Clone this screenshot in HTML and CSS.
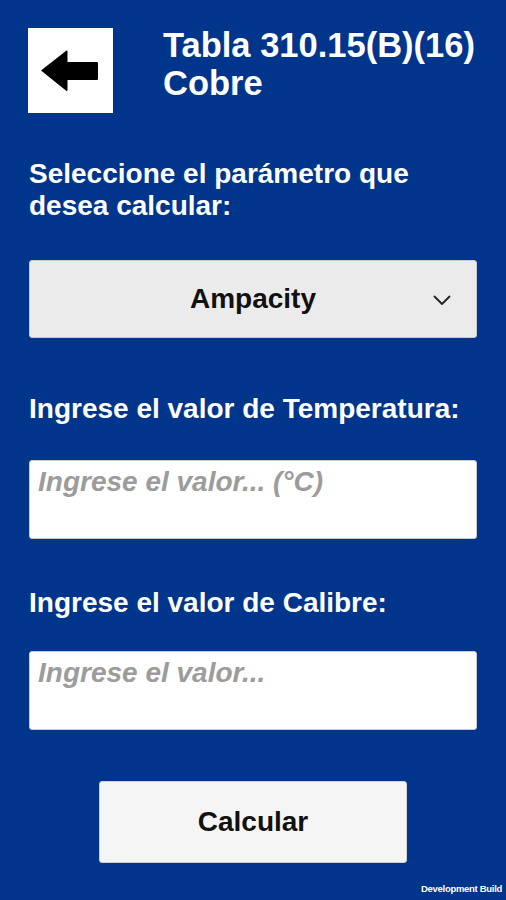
FILE: index.html
```html
<!DOCTYPE html>
<html lang="es">
<head>
<meta charset="utf-8">
<title>Tabla 310.15(B)(16) Cobre</title>
<link rel="stylesheet" href="styles.css">
</head>
<body>
<main class="screen">
  <header class="header">
    <button class="back" type="button" aria-label="Atrás">
      <svg width="85" height="85" viewBox="0 0 85 85">
        <path d="M13 42.5 L38.5 22.5 Q39.5 22 39.5 23.5 L39.5 34 L69 34 Q70 34 70 35 L70 51 Q70 52 69 52 L39.5 52 L39.5 62 Q39.5 63.5 38.5 63 Z" fill="#000"/>
      </svg>
    </button>
    <h1 class="title">Tabla 310.15(B)(16)<br>Cobre</h1>
  </header>

  <p class="label label-first">Seleccione el parámetro que desea calcular:</p>
  <div class="select">
    <span class="select-text">Ampacity</span>
    <svg class="chevron" width="18" height="11" viewBox="0 0 18 11">
      <path d="M1.5 1.5 L9 9 L16.5 1.5" fill="none" stroke="#222" stroke-width="1.8" stroke-linecap="round" stroke-linejoin="round"/>
    </svg>
  </div>

  <p class="label label-temp">Ingrese el valor de Temperatura:</p>
  <div class="input"><span class="placeholder">Ingrese el valor... (°C)</span></div>

  <p class="label label-cal">Ingrese el valor de Calibre:</p>
  <div class="input"><span class="placeholder">Ingrese el valor...</span></div>

  <div class="actions">
    <button class="calc" type="button">Calcular</button>
  </div>
  <div class="devbuild">Development Build</div>
</main>
</body>
</html>
```

FILE: styles.css
```css
html, body {
  margin: 0;
  padding: 0;
  background: #00358c;
}
body {
  font-family: "Liberation Sans", Arial, sans-serif;
  color: #fff;
}
.screen {
  width: 506px;
  height: 900px;
  box-sizing: border-box;
  padding: 28px 29px 0 29px;
  display: flex;
  flex-direction: column;
  position: relative;
}
.header {
  display: flex;
  align-items: flex-start;
  gap: 50px;
  margin-left: -1px;
  height: 85px;
}
.back {
  width: 85px;
  height: 85px;
  padding: 0;
  margin: 0;
  border: none;
  background: #fff;
  display: block;
  flex: none;
}
.back svg { display: block; }
.title {
  margin: -2px 0 0 0;
  font-size: 34.5px;
  line-height: 38px;
  font-weight: bold;
}
.label {
  margin: 0;
  font-size: 28px;
  line-height: 32px;
  font-weight: bold;
}
.label-first { margin-top: 45px; }
.label-temp { margin-top: 55px; }
.label-cal { margin-top: 48px; }
.select {
  margin-top: 38px;
  height: 78px;
  box-sizing: border-box;
  background: #ebebeb;
  border: 1px solid #c9c9cf;
  border-radius: 3px;
  display: flex;
  align-items: center;
  justify-content: center;
  position: relative;
  color: #111;
}
.select-text {
  font-size: 28px;
  font-weight: bold;
}
.chevron {
  position: absolute;
  right: 25px;
  top: 34px;
}
.input {
  margin-top: 35px;
  height: 79px;
  box-sizing: border-box;
  background: #fff;
  border: 1px solid #c9c9cf;
  border-radius: 3px;
  padding: 5px 8px;
}
.label-cal + .input { margin-top: 32px; }
.placeholder {
  display: block;
  font-size: 28px;
  line-height: 32px;
  font-weight: bold;
  font-style: italic;
  color: #9c9c9c;
}
.actions {
  display: flex;
  justify-content: center;
  margin-top: 51px;
}
.calc {
  width: 308px;
  height: 82px;
  border: 1px solid #d0d0d6;
  border-radius: 3px;
  background: #f5f5f5;
  font-family: "Liberation Sans", Arial, sans-serif;
  font-size: 28px;
  font-weight: bold;
  color: #111;
  padding: 0;
}
.devbuild {
  position: absolute;
  right: 4px;
  bottom: 6px;
  font-size: 9.5px;
  line-height: 11px;
  font-weight: bold;
  color: #fff;
  letter-spacing: -0.3px;
}
```
